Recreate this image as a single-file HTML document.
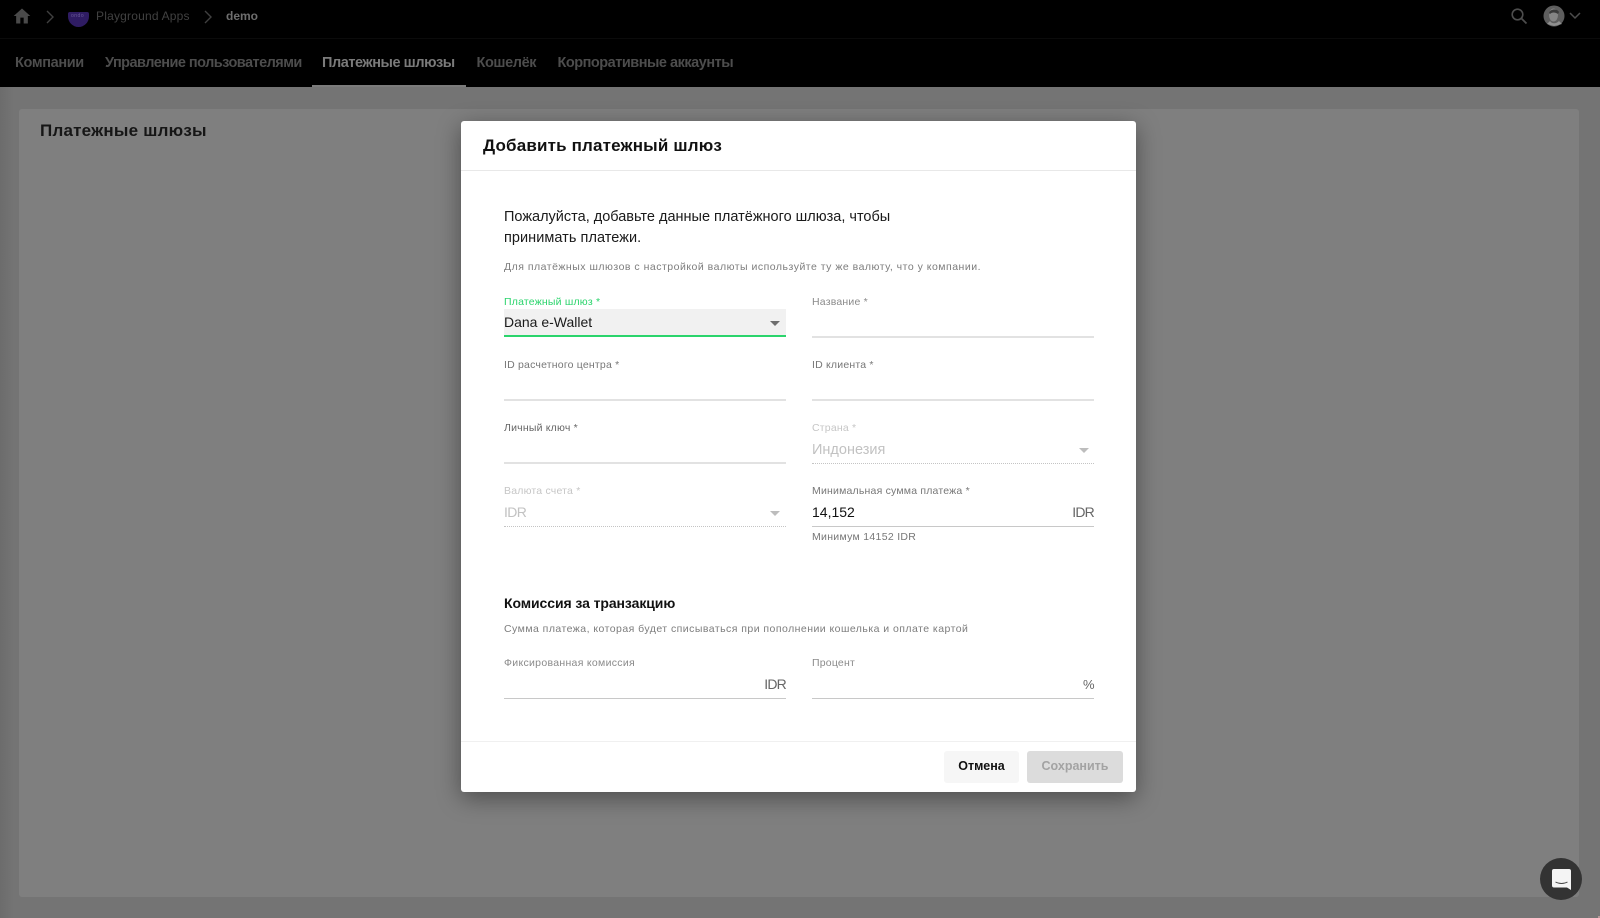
<!DOCTYPE html>
<html lang="ru"><head><meta charset="utf-8"><title>Платежные шлюзы</title>
<style>
html,body{margin:0;padding:0;width:1600px;height:918px;overflow:hidden;background:#747474;font-family:"Liberation Sans",sans-serif}
.a{position:absolute;white-space:nowrap}
.t{position:absolute;white-space:nowrap;line-height:20px;height:20px}
.tab{font-size:14.5px;font-weight:bold;color:#4d4d4d;top:53px}
.lb{font-size:10.5px;color:#8a8a8a;letter-spacing:.2px}
.ln{position:absolute;height:2px;background:#e2e2e2;width:282px}
.dt{position:absolute;height:0;border-bottom:1px dotted #c4c4c4;width:282px}
.tri{position:absolute;width:0;height:0;border-left:5px solid transparent;border-right:5px solid transparent;border-top:5px solid #6e6e6e}
</style></head><body>
<div class="a" style="left:0;top:87px;width:14px;height:831px;background:linear-gradient(90deg,#6c6c6c,#747474)"></div>
<div class="a" style="left:0;top:0;width:1600px;height:87px;background:#000"></div>
<div class="a" style="left:0;top:38px;width:1600px;height:1px;background:#0b0b0b"></div>
<svg class="a" style="left:12px;top:6px" width="20" height="20" viewBox="0 0 24 24"><path d="M10 21v-7h4v7h5v-9h3L12 3 2 12h3v9z" fill="#4a4a4a"/></svg>
<svg class="a" style="left:44px;top:9px" width="12" height="16" viewBox="0 0 12 16"><path d="M3 2l6 6-6 6" fill="none" stroke="#404040" stroke-width="1.4"/></svg>
<div class="a" style="left:68px;top:12px;width:21px;height:15px;background:#2f1c63;border-radius:2px 2px 11px 11px"></div>
<div class="t" style="left:71px;top:6px;font-size:5px;color:#6a5a98;letter-spacing:.5px">ondo</div>
<div class="t" style="left:96px;top:6px;font-size:12px;color:#414141;letter-spacing:.2px">Playground Apps</div>
<svg class="a" style="left:202px;top:9px" width="12" height="16" viewBox="0 0 12 16"><path d="M3 2l6 6-6 6" fill="none" stroke="#404040" stroke-width="1.4"/></svg>
<div class="t" style="left:226px;top:6px;font-size:12px;font-weight:bold;color:#6e6e6e">demo</div>
<svg class="a" style="left:1510px;top:7px" width="18" height="18" viewBox="0 0 18 18"><circle cx="7.500" cy="7.500" r="5.300" fill="none" stroke="#4d4d4d" stroke-width="1.600"/><path d="M11.500 11.500l5 5" stroke="#4d4d4d" stroke-width="1.800"/></svg>
<svg class="a" style="left:1543px;top:5px" width="22" height="22" viewBox="0 0 22 22"><circle cx="11" cy="11" r="10.500" fill="#5e5e5e"/><ellipse cx="10.500" cy="10" rx="4.500" ry="6.500" fill="#858585"/><path d="M6 8c1-4 8-5 10-1l-1 2c-3-2-6-2-8 0z" fill="#3a3a3a"/><path d="M7 16c2 3 6 3 9 0l3 3-8 2-7-2z" fill="#8f8f8f"/></svg>
<svg class="a" style="left:1569px;top:11px" width="12" height="10" viewBox="0 0 12 10"><path d="M1 2l5 5 5-5" fill="none" stroke="#4d4d4d" stroke-width="1.500"/></svg>

<div class="t tab" style="left:15px;letter-spacing:-.35px">Компании</div>
<div class="t tab" style="left:105px;letter-spacing:-.53px">Управление пользователями</div>
<div class="t tab" style="left:322px;color:#7b7b7b;letter-spacing:-.45px">Платежные шлюзы</div>
<div class="t tab" style="left:476.500px;letter-spacing:-.4px">Кошелёк</div>
<div class="t tab" style="left:557.500px;letter-spacing:-.48px">Корпоративные аккаунты</div>
<div class="a" style="left:312px;top:85px;width:154px;height:2px;background:#7b7b7b"></div>

<div class="a" style="left:19px;top:109px;width:1560px;height:788px;background:#7f7f7f;border-radius:3px"></div>
<div class="t" style="left:40px;top:121px;font-size:17px;font-weight:bold;color:#161616;letter-spacing:.22px">Платежные шлюзы</div>

<div class="a" style="left:1598px;top:916px;width:2px;height:2px;background:#b89a9a"></div>
<div class="a" style="left:461px;top:121px;width:675px;height:671px;background:#fff;border-radius:3px;box-shadow:0 6px 24px rgba(0,0,0,.4)"></div>
<div class="t" style="left:483px;top:135.500px;font-size:17px;font-weight:bold;color:#111;letter-spacing:.17px">Добавить платежный шлюз</div>
<div class="a" style="left:461px;top:170px;width:675px;height:1px;background:#e8e8e8"></div>

<div class="t" style="left:504px;top:207px;font-size:14.500px;color:#1a1a1a">Пожалуйста, добавьте данные платёжного шлюза, чтобы</div>
<div class="t" style="left:504px;top:228px;font-size:14.500px;color:#1a1a1a;letter-spacing:.05px">принимать платежи.</div>
<div class="t" style="left:504px;top:257px;font-size:10.500px;color:#7d7d7d;letter-spacing:.5px">Для платёжных шлюзов с настройкой валюты используйте ту же валюту, что у компании.</div>

<div class="t lb" style="left:504px;top:292px;color:#2bd46c">Платежный шлюз *</div>
<div class="a" style="left:504px;top:309px;width:282px;height:27px;background:#f1f1f1"></div>
<div class="ln" style="left:504px;top:335px;background:#2bd46c"></div>
<div class="t" style="left:504px;top:312px;font-size:14px;color:#1a1a1a">Dana e-Wallet</div>
<div class="tri" style="left:770px;top:321px"></div>

<div class="t lb" style="left:812px;top:292px">Название *</div>
<div class="ln" style="left:812px;top:336px"></div>

<div class="t lb" style="left:504px;top:355px;color:#777">ID расчетного центра *</div>
<div class="ln" style="left:504px;top:399px"></div>
<div class="t lb" style="left:812px;top:355px;color:#777">ID клиента *</div>
<div class="ln" style="left:812px;top:399px"></div>

<div class="t lb" style="left:504px;top:418px;color:#666">Личный ключ *</div>
<div class="ln" style="left:504px;top:462px"></div>
<div class="t lb" style="left:812px;top:418px;color:#c6c6c6">Страна *</div>
<div class="t" style="left:812px;top:440px;font-size:14.500px;color:#c2c2c2">Индонезия</div>
<div class="tri" style="left:1079px;top:448px;border-top-color:#bdbdbd"></div>
<div class="dt" style="left:812px;top:463px"></div>

<div class="t lb" style="left:504px;top:481px;color:#c6c6c6">Валюта счета *</div>
<div class="t" style="left:504px;top:502px;font-size:14px;color:#c2c2c2;letter-spacing:-.6px">IDR</div>
<div class="tri" style="left:770px;top:511px;border-top-color:#bdbdbd"></div>
<div class="dt" style="left:504px;top:526px"></div>

<div class="t lb" style="left:812px;top:481px;color:#777">Минимальная сумма платежа *</div>
<div class="t" style="left:812px;top:502px;font-size:14px;color:#111">14,152</div>
<div class="t" style="right:506px;top:502px;font-size:14px;color:#666;letter-spacing:-.8px">IDR</div>
<div class="a" style="left:812px;top:526px;width:282px;height:1px;background:#c8c8c8"></div>
<div class="t lb" style="left:812px;top:527px;color:#777;letter-spacing:.3px">Минимум 14152 IDR</div>

<div class="t" style="left:504px;top:593px;font-size:14px;font-weight:bold;color:#111;letter-spacing:-.08px">Комиссия за транзакцию</div>
<div class="t" style="left:504px;top:619px;font-size:10.500px;color:#7d7d7d;letter-spacing:.46px">Сумма платежа, которая будет списываться при пополнении кошелька и оплате картой</div>

<div class="t lb" style="left:504px;top:653px;letter-spacing:.3px">Фиксированная комиссия</div>
<div class="t" style="right:814px;top:674px;font-size:14px;color:#666;letter-spacing:-.8px">IDR</div>
<div class="a" style="left:504px;top:698px;width:282px;height:1px;background:#c8c8c8"></div>
<div class="t lb" style="left:812px;top:653px">Процент</div>
<div class="t" style="right:506px;top:675px;font-size:13px;color:#666;letter-spacing:-.5px">%</div>
<div class="a" style="left:812px;top:698px;width:282px;height:1px;background:#c8c8c8"></div>

<div class="a" style="left:461px;top:741px;width:675px;height:1px;background:#f0f0f0"></div>
<div class="a" style="left:944px;top:751px;width:75px;height:32px;background:#f6f6f6;border-radius:3px"></div>
<div class="t" style="left:944px;top:756px;width:75px;text-align:center;font-size:12.500px;font-weight:bold;color:#111">Отмена</div>
<div class="a" style="left:1027px;top:751px;width:96px;height:32px;background:#dcdcdc;border-radius:3px"></div>
<div class="t" style="left:1027px;top:756px;width:96px;text-align:center;font-size:12.500px;font-weight:bold;color:#a3a3a3">Сохранить</div>

<div class="a" style="left:1540px;top:858px;width:42px;height:42px;border-radius:50%;background:#333"></div>
<svg class="a" style="left:1552px;top:869px" width="19" height="21" viewBox="0 0 19 21"><path d="M2 0h15a2 2 0 0 1 2 2v19l-4-2.500H2a2 2 0 0 1-2-2V2a2 2 0 0 1 2-2z" fill="#f4f4f4"/><path d="M3.500 13c3.500 2 8.500 2 12 0" fill="none" stroke="#444" stroke-width="1"/></svg>
</body></html>
